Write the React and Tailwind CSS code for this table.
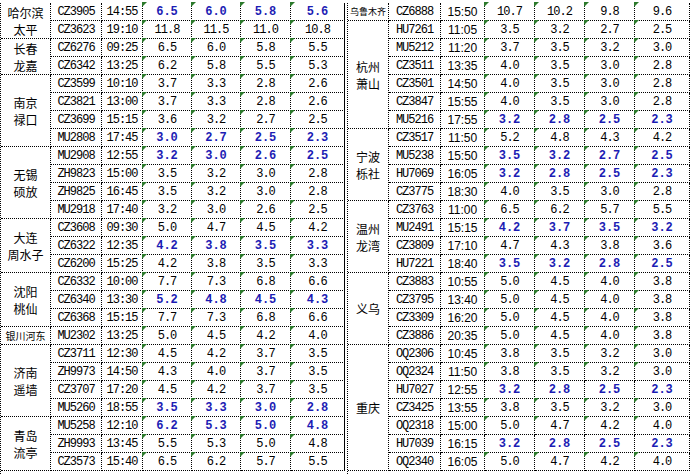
const LEFT = [
  { city: ['哈尔滨', '太平'], rows: [
    ['CZ3905', '14:55', '6.5', '6.0', '5.8', '5.6', true],
    ['CZ3623', '19:10', '11.8', '11.5', '11.0', '10.8'],
  ] },
  { city: ['长春', '龙嘉'], rows: [
    ['CZ6276', '09:25', '6.5', '6.0', '5.8', '5.5'],
    ['CZ6342', '13:25', '6.2', '5.8', '5.5', '5.3'],
  ] },
  { city: ['南京', '禄口'], rows: [
    ['CZ3599', '10:10', '3.7', '3.3', '2.8', '2.6'],
    ['CZ3821', '13:00', '3.7', '3.3', '2.8', '2.6'],
    ['CZ3699', '15:15', '3.6', '3.2', '2.7', '2.5'],
    ['MU2808', '17:45', '3.0', '2.7', '2.5', '2.3', true],
  ] },
  { city: ['无锡', '硕放'], rows: [
    ['MU2908', '12:55', '3.2', '3.0', '2.6', '2.5', true],
    ['ZH9823', '15:00', '3.5', '3.2', '3.0', '2.8'],
    ['ZH9825', '16:45', '3.5', '3.2', '3.0', '2.8'],
    ['MU2918', '17:40', '3.2', '3.0', '2.6', '2.5'],
  ] },
  { city: ['大连', '周水子'], rows: [
    ['CZ3608', '09:30', '5.0', '4.7', '4.5', '4.2'],
    ['CZ6322', '12:35', '4.2', '3.8', '3.5', '3.3', true],
    ['CZ6200', '15:25', '4.2', '3.8', '3.5', '3.3'],
  ] },
  { city: ['沈阳', '桃仙'], rows: [
    ['CZ6332', '10:00', '7.7', '7.3', '6.8', '6.6'],
    ['CZ6340', '13:30', '5.2', '4.8', '4.5', '4.3', true],
    ['CZ6368', '15:15', '7.7', '7.3', '6.8', '6.6'],
  ] },
  { city: ['银川河东'], small: 'text-[10px]', rows: [
    ['MU2302', '13:25', '5.0', '4.5', '4.2', '4.0'],
  ] },
  { city: ['济南', '遥墙'], rows: [
    ['CZ3711', '12:30', '4.5', '4.2', '3.7', '3.5'],
    ['ZH9973', '14:50', '4.3', '4.0', '3.7', '3.5'],
    ['CZ3707', '17:20', '4.5', '4.2', '3.7', '3.5'],
    ['MU5260', '18:55', '3.5', '3.3', '3.0', '2.8', true],
  ] },
  { city: ['青岛', '流亭'], rows: [
    ['MU5258', '12:10', '6.2', '5.3', '5.0', '4.8', true],
    ['ZH9993', '13:45', '5.5', '5.3', '5.0', '4.8'],
    ['CZ3573', '15:40', '6.5', '6.2', '5.7', '5.5'],
  ] },
]

const RIGHT = [
  { city: ['乌鲁木齐'], small: 'text-[9px]', rows: [
    ['CZ6888', '15:50', '10.7', '10.2', '9.8', '9.6'],
  ] },
  { city: ['杭州', '萧山'], rows: [
    ['HU7261', '11:05', '3.5', '3.2', '2.7', '2.5'],
    ['MU5212', '11:20', '3.7', '3.5', '3.2', '3.0'],
    ['CZ3511', '13:35', '4.0', '3.5', '3.0', '2.8'],
    ['CZ3501', '14:50', '4.0', '3.5', '3.0', '2.8'],
    ['CZ3847', '15:55', '4.0', '3.5', '3.0', '2.8'],
    ['MU5216', '17:55', '3.2', '2.8', '2.5', '2.3', true],
  ] },
  { city: ['宁波', '栎社'], rows: [
    ['CZ3517', '11:50', '5.2', '4.8', '4.3', '4.2'],
    ['MU5238', '15:50', '3.5', '3.2', '2.7', '2.5', true],
    ['HU7069', '16:05', '3.2', '2.8', '2.5', '2.3', true],
    ['CZ3775', '18:30', '4.0', '3.5', '3.0', '2.8'],
  ] },
  { city: ['温州', '龙湾'], rows: [
    ['CZ3763', '11:00', '6.5', '6.2', '5.7', '5.5'],
    ['MU2491', '15:15', '4.2', '3.7', '3.5', '3.2', true],
    ['CZ3809', '17:10', '4.7', '4.3', '3.8', '3.6'],
    ['HU7221', '18:40', '3.5', '3.2', '2.8', '2.5', true],
  ] },
  { city: ['义乌'], rows: [
    ['CZ3883', '10:55', '5.0', '4.5', '4.0', '3.8'],
    ['CZ3795', '13:40', '5.0', '4.5', '4.0', '3.8'],
    ['CZ3309', '16:20', '5.0', '4.5', '4.0', '3.8'],
    ['CZ3886', '20:35', '5.0', '4.5', '4.0', '3.8'],
  ] },
  { city: ['重庆'], rows: [
    ['OQ2306', '10:45', '3.8', '3.5', '3.2', '3.0'],
    ['OQ2324', '11:50', '3.8', '3.5', '3.2', '3.0'],
    ['HU7027', '12:55', '3.2', '2.8', '2.5', '2.3', true, true],
    ['CZ3425', '13:55', '3.8', '3.5', '3.2', '3.0'],
    ['OQ2318', '15:00', '5.0', '4.7', '4.2', '4.0'],
    ['HU7039', '16:15', '3.2', '2.8', '2.5', '2.3', true, true],
    ['OQ2340', '16:05', '5.0', '4.7', '4.2', '4.0'],
  ] },
]

const SPAN = {
  1: 'row-span-1', 2: 'row-span-2', 3: 'row-span-3', 4: 'row-span-4',
  6: 'row-span-6', 7: 'row-span-7',
}

const cell = 'flex items-center justify-center border-r border-b border-dotted border-black'
const mono = "font-['Liberation_Mono',monospace] text-[12px] tracking-[-1px]"
const cjk = "font-['Noto_Sans_CJK_SC',sans-serif]"

function Tri() {
  return (
    <span className="absolute -left-px -top-px h-[5px] w-[5px] bg-[#2b7a2b] [clip-path:polygon(0_0,100%_0,0_100%)]" />
  )
}

function Half({ groups, cols, lastCell, timeFont, className }) {
  return (
    <div className={`grid auto-rows-[18px] border-l border-dotted border-black ${cols} ${className}`}>
      {groups.map((g) => [
        <div
          key={g.city.join('')}
          className={`${cell} ${SPAN[g.rows.length]} ${cjk} flex-col leading-[17px] ${g.small || 'text-[12px]'}`}
        >
          {g.city.map((c) => <span key={c}>{c}</span>)}
        </div>,
        ...g.rows.map((r) => {
          const [code, time, ...rest] = r
          const vals = rest.slice(0, 4)
          const blue = rest[4]
          const noTri = rest[5]
          return [
            <div key={code + 'c'} className={`${cell} ${mono}`}>{code}</div>,
            <div key={code + 't'} className={`${cell} ${timeFont}`}>{time}</div>,
            ...vals.map((v, i) => (
              <div
                key={code + i}
                className={`relative ${cell} ${i === 3 ? lastCell : ''} ${
                  blue
                    ? "font-['Liberation_Mono',monospace] text-[12px] font-bold text-[#1c1cb4]"
                    : mono
                }`}
              >
                {!noTri && <Tri />}
                {v}
              </div>
            )),
          ]
        }),
      ])}
    </div>
  )
}

export default function App() {
  return (
    <div className="flex w-[692px] h-[474px] bg-white pt-[3px] text-black overflow-hidden">
      <Half
        groups={LEFT}
        cols="grid-cols-[50px_51px_41px_49px_49px_50px_54px]"
        lastCell="[border-right-style:solid]"
        timeFont={mono}
        className="w-[345px]"
      />
      <Half
        groups={RIGHT}
        cols="grid-cols-[41px_52px_44px_50px_50px_50px_55px]"
        lastCell=""
        timeFont="font-['Liberation_Sans',sans-serif] text-[12px]"
        className="ml-[2px] w-[343px]"
      />
    </div>
  )
}
